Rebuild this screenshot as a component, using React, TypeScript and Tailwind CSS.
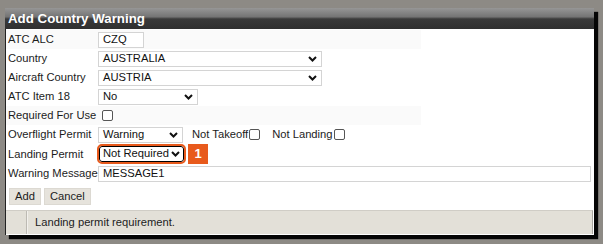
import React from "react";

const Chevron = () => (
  <svg width="9" height="6" viewBox="0 0 9 6" className="shrink-0">
    <polyline points="1,1 4.5,4.5 8,1" fill="none" stroke="#111" strokeWidth="2" />
  </svg>
);

const Select: React.FC<{ value: string; width: string; focused?: boolean }> = ({ value, width, focused }) => (
  <div
    className={
      "h-[16px] flex items-center justify-between bg-white text-[#111] " +
      width +
      (focused
        ? " pl-[3px] pr-[3px] border border-black rounded-[3px] outline-2 outline-[#e85a1c] ml-[1px]"
        : " pl-[4px] pr-[4px] border border-[#d4d4d4]")
    }
  >
    <span className="leading-none whitespace-nowrap">{value}</span>
    <Chevron />
  </div>
);

const TextBox: React.FC<{ value: string; width: string }> = ({ value, width }) => (
  <div className={"h-[16px] flex items-center pl-[4px] bg-white border border-[#d4d4d4] text-[#111] " + width}>
    <span className="leading-none">{value}</span>
  </div>
);

const Check = () => (
  <span className="inline-block w-[11px] h-[11px] border border-[#555] rounded-[2px] bg-white shrink-0" />
);

const Row: React.FC<{ label: string; shade?: boolean; tall?: boolean; children: React.ReactNode }> = ({
  label,
  shade,
  tall,
  children,
}) => (
  <div className={"flex items-center " + (tall ? "h-[20px]" : "h-[19px]") + (shade ? " bg-[#fafafa] w-[415px]" : "")}>
    <div className="w-[92px] pl-[2px] text-[#1c1c1c] shrink-0 whitespace-nowrap">{label}</div>
    {children}
  </div>
);

export default function App() {
  return (
    <div className="w-[603px] h-[244px] bg-[#8d8a85] overflow-hidden pt-[8px] pl-[5px] font-['Liberation_Sans',Arial,sans-serif] text-[11.2px]">
      <div className="w-[589px] h-[227px] bg-white border-l border-[#222] shadow-[4px_4px_1px_#050505] flex flex-col">
        <div className="h-[21px] flex items-center pl-[3px] bg-[linear-gradient(to_bottom,#969696_0%,#747474_42%,#3a3a3a_52%,#303030_100%)] text-white font-bold text-[13.3px] -ml-px">
          Add Country Warning
        </div>
        <div className="pt-[1px]">
          <Row label="ATC ALC" shade>
            <TextBox value="CZQ" width="w-[46px]" />
          </Row>
          <Row label="Country">
            <Select value="AUSTRALIA" width="w-[224px]" />
          </Row>
          <Row label="Aircraft Country">
            <Select value="AUSTRIA" width="w-[224px]" />
          </Row>
          <Row label="ATC Item 18">
            <Select value="No" width="w-[100px]" />
          </Row>
          <Row label="Required For Use" shade>
            <span className="ml-[4px] flex">
              <Check />
            </span>
          </Row>
          <Row label="Overflight Permit">
            <Select value="Warning" width="w-[85px]" />
            <span className="ml-[9px] text-[#1c1c1c]">Not Takeoff</span>
            <span className="ml-[1px] flex">
              <Check />
            </span>
            <span className="ml-[12px] text-[#1c1c1c]">Not Landing</span>
            <span className="ml-[1px] flex">
              <Check />
            </span>
          </Row>
          <Row label="Landing Permit" tall>
            <Select value="Not Required" width="w-[85px]" focused />
            <div className="ml-[4px] w-[20px] h-[20px] bg-[#e85a1c] text-white font-bold text-[13px] flex items-center justify-center">
              1
            </div>
          </Row>
          <Row label="Warning Message">
            <TextBox value="MESSAGE1" width="w-[493px]" />
          </Row>
        </div>
        <div className="flex gap-[3px] ml-[3px] mt-[5px]">
          <button className="h-[17px] px-[5px] bg-[#e6e3dc] border border-[#dcd9d2] text-[#1c1c1c] leading-none">Add</button>
          <button className="h-[17px] px-[5px] bg-[#e6e3dc] border border-[#dcd9d2] text-[#1c1c1c] leading-none">Cancel</button>
        </div>
        <div className="mt-[5px] h-[24px] mr-[1px] flex bg-[#e3e0d8] border-t border-[#d0cdc6] border-r border-r-[#a9a6a0]">
          <div className="w-[21px] border-r border-[#bdbab3]" />
          <div className="flex items-center pl-[7px] text-[#1c1c1c] border-l border-[#f2f0ec]">
            Landing permit requirement.
          </div>
        </div>
      </div>
    </div>
  );
}
